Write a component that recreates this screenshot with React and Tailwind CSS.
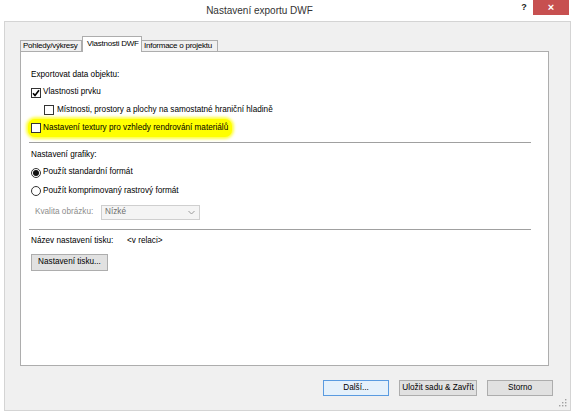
import React from "react";

function CheckBox({ checked }) {
  return (
    <span className="w-[10px] h-[10px] border border-[#333] bg-white flex items-center justify-center shrink-0">
      {checked && (
        <svg width="8" height="8" viewBox="0 0 8 8">
          <path d="M1 4.2 L3 6.4 L7 1.2" fill="none" stroke="#000" strokeWidth="1.6" />
        </svg>
      )}
    </span>
  );
}

function Radio({ checked }) {
  return (
    <span className="w-[10px] h-[10px] rounded-full border border-[#333] bg-white flex items-center justify-center shrink-0">
      {checked && <span className="w-[6px] h-[6px] rounded-full bg-[#111]" />}
    </span>
  );
}

export default function App() {
  return (
    <div
      className="w-[573px] h-[413px] bg-white overflow-hidden text-black whitespace-nowrap"
      style={{ fontFamily: '"Liberation Sans", Arial, sans-serif' }}
    >
      {/* Title bar */}
      <div className="h-[21px] flex items-start">
        <div className="flex-1 h-full flex items-center justify-center pl-[4px] text-[10px] text-[#333]">
          Nastavení exportu DWF
        </div>
        <div className="w-[18px] h-[15px] flex items-center justify-center text-[9px] font-bold text-[#222]">?</div>
        <div className="w-[36px] h-[15px] bg-[#c75050] flex items-center justify-center text-white text-[11px] font-bold leading-none">
          ×
        </div>
        <div className="w-[4px]" />
      </div>

      {/* Dialog body */}
      <div className="ml-[4px] w-[567px] h-[390px] border border-[#d4d4d4] bg-[#f0f0f0] pl-[15px] pt-[14px] flex flex-col">
        {/* Tabs */}
        <div className="flex items-end h-[15px] text-[8px] tracking-[-0.25px]">
          <div className="w-[62px] h-[11px] border border-b-0 border-[#adadad] bg-[#f0f0f0] flex items-center pl-[2px]">
            Pohledy/výkresy
          </div>
          <div className="w-[60px] h-[16px] -mb-px relative z-10 border border-b-0 border-[#adadad] bg-white flex items-center pl-[4px] pb-[2px]">
            Vlastnosti DWF
          </div>
          <div className="w-[76px] h-[11px] border border-b-0 border-l-0 border-[#adadad] bg-[#f0f0f0] flex items-center pl-[2px]">
            Informace o projektu
          </div>
        </div>

        {/* Panel */}
        <div className="w-[529px] h-[315px] border border-[#adadad] bg-white pl-[10px] pt-[15px] flex flex-col text-[8.2px]">
          <div className="h-[17px] flex items-center">Exportovat data objektu:</div>
          <div className="h-[17px] flex items-center gap-[2px]">
            <CheckBox checked />
            <span>Vlastnosti prvku</span>
          </div>
          <div className="h-[18px] flex items-center gap-[3px] pl-[13px]">
            <CheckBox />
            <span>Místnosti, prostory a plochy na samostatné hraniční hladině</span>
          </div>
          <div className="h-[18px] -ml-[3px] pl-[3px] w-[204px] flex items-center gap-[2px] bg-[#ffff00] rounded-[7px] shadow-[0_0_3px_2px_#ffff40]">
            <CheckBox />
            <span>Nastavení textury pro vzhledy rendrování materiálů</span>
          </div>

          <div className="mt-[5px] -ml-[2px] w-[502px] h-px bg-[#a0a0a0]" />

          <div className="mt-[4px] h-[17px] flex items-center">Nastavení grafiky:</div>
          <div className="h-[17px] flex items-center gap-[2px]">
            <Radio checked />
            <span>Použít standardní formát</span>
          </div>
          <div className="mt-[1px] h-[18px] flex items-center gap-[2px]">
            <Radio />
            <span>Použít komprimovaný rastrový formát</span>
          </div>
          <div className="mt-[5px] h-[15px] flex items-center pl-[4px]">
            <span className="w-[66px] text-[#8d8d8d]">Kvalita obrázku:</span>
            <div className="w-[99px] h-[15px] border border-[#cfcfcf] bg-[#f4f4f4] flex items-center justify-between pl-[3px] pr-[4px] text-[#6d6d6d]">
              <span>Nízké</span>
              <svg width="7" height="5" viewBox="0 0 7 5">
                <path d="M0.5 1 L3.5 4 L6.5 1" fill="none" stroke="#9a9a9a" strokeWidth="1" />
              </svg>
            </div>
          </div>

          <div className="mt-[9px] -ml-[2px] w-[502px] h-px bg-[#a0a0a0]" />

          <div className="mt-[3px] h-[17px] flex items-center">
            <span className="w-[96px]">Název nastavení tisku:</span>
            <span>&lt;v relaci&gt;</span>
          </div>
          <div className="mt-[4px] w-[77px] h-[17px] border border-[#adadad] bg-[#e1e1e1] flex items-center justify-center">
            Nastavení tisku...
          </div>
        </div>

        {/* Bottom buttons */}
        <div className="mt-[14px] flex justify-end pr-[17px] text-[8.2px] gap-[10px]">
          <div className="w-[66px] h-[16px] border border-[#5a9be0] bg-[#e5f1fb] flex items-center justify-center">
            Další...
          </div>
          <div className="w-[78px] h-[16px] border border-[#adadad] bg-[#e1e1e1] flex items-center justify-center">
            Uložit sadu &amp; Zavřít
          </div>
          <div className="w-[66px] h-[16px] border border-[#adadad] bg-[#e1e1e1] flex items-center justify-center">
            Storno
          </div>
        </div>
        <div className="flex justify-end pr-[3px] mt-[3px]">
          <svg width="8" height="8" viewBox="0 0 8 8">
            <rect x="6" y="6" width="1.4" height="1.4" fill="#a0a0a0" />
            <rect x="3" y="6" width="1.4" height="1.4" fill="#a0a0a0" />
            <rect x="0" y="6" width="1.4" height="1.4" fill="#a0a0a0" />
            <rect x="6" y="3" width="1.4" height="1.4" fill="#a0a0a0" />
            <rect x="3" y="3" width="1.4" height="1.4" fill="#a0a0a0" />
            <rect x="6" y="0" width="1.4" height="1.4" fill="#a0a0a0" />
          </svg>
        </div>
      </div>
    </div>
  );
}
